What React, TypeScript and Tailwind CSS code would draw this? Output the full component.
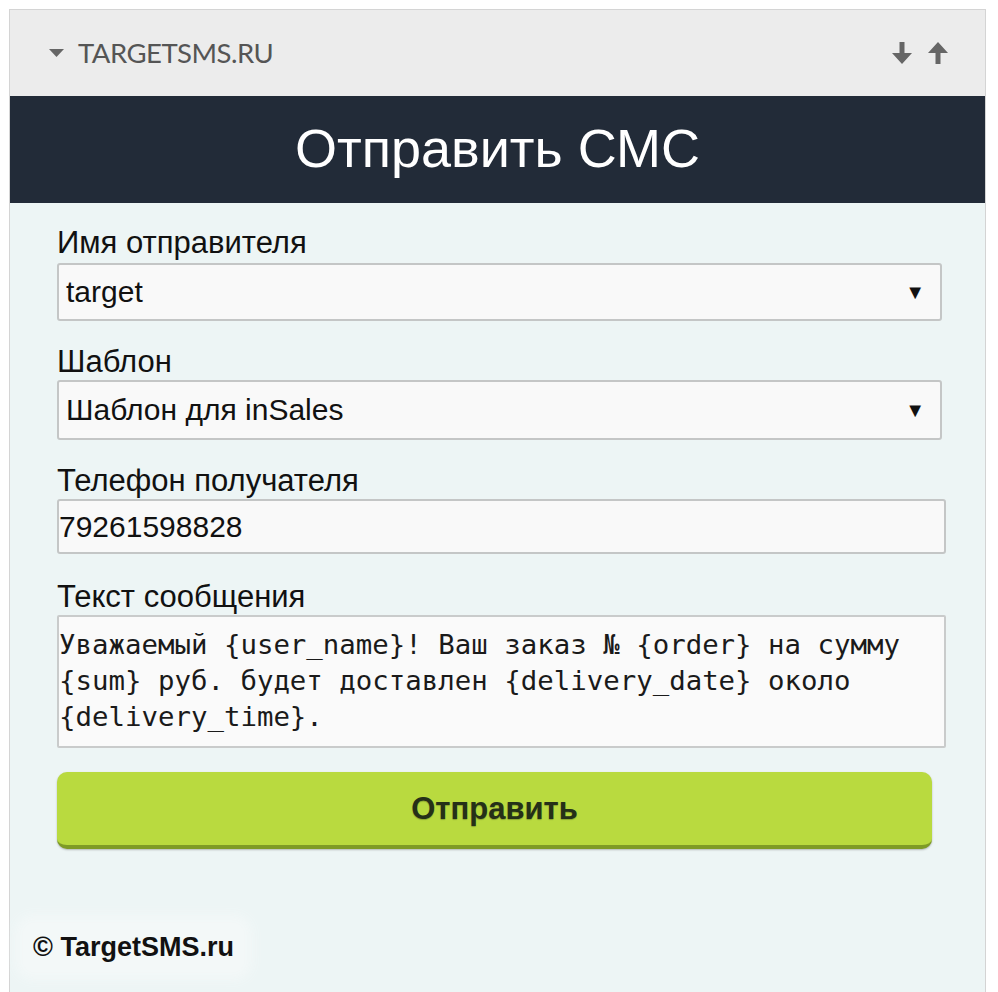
import React from "react";

function Arrow({ up }: { up?: boolean }) {
  return (
    <svg width="22" height="24" viewBox="0 0 22 24" className={up ? "" : "rotate-180"}>
      <path d="M11 1 L21 12 L13.5 12 L13.5 23 L8.5 23 L8.5 12 L1 12 Z" fill="#666666" />
    </svg>
  );
}

export default function App() {
  return (
    <div className="min-h-[992px] w-[998px] overflow-hidden bg-white" style={{ fontFamily: "Arial, 'Liberation Sans', sans-serif" }}>
      <div className="ml-[9px] mt-[9px] w-[977px] h-[1000px] border border-[#d4d4d4] flex flex-col">
        <div className="h-[86px] bg-[#ececec] flex items-center justify-between pl-[39px] pr-[36px]">
          <div className="flex items-center gap-[14px]">
            <svg width="15" height="8" viewBox="0 0 15 8"><path d="M0 0 L15 0 L7.5 8 Z" fill="#666" /></svg>
            <span className="text-[27.5px] text-[#555] tracking-[-0.5px]" style={{ fontFamily: "Lato, sans-serif" }}>TARGETSMS.RU</span>
          </div>
          <div className="flex items-center gap-[14px] pb-[1px]">
            <Arrow />
            <Arrow up />
          </div>
        </div>
        <div className="h-[107px] bg-[#222b38] flex items-center justify-center">
          <h1 className="text-[54px] text-white leading-none pb-[4px]">Отправить СМС</h1>
        </div>
        <div className="flex-1 bg-[#edf5f5] pl-[47px] pr-[39px] pt-[23px] text-[#111]">
          <div className="text-[31px] leading-[34px]">Имя отправителя</div>
          <div className="mt-[3px] w-[885px] h-[58px] bg-[#f9f9f9] border-2 border-[#c4c6c6] rounded-[3px] flex items-center justify-between pl-[7px] pr-[15px]">
            <span className="text-[30px] pb-[1px]">target</span>
            <span className="text-[20px]">▼</span>
          </div>
          <div className="mt-[24px] text-[31px] leading-[34px]">Шаблон</div>
          <div className="mt-[1px] w-[885px] h-[60px] bg-[#f9f9f9] border-2 border-[#c4c6c6] rounded-[3px] flex items-center justify-between pl-[7px] pr-[15px]">
            <span className="text-[30px] pb-[1px]">Шаблон для inSales</span>
            <span className="text-[20px]">▼</span>
          </div>
          <div className="mt-[24px] text-[31px] leading-[34px]">Телефон получателя</div>
          <div className="mt-[1px] w-[889px] h-[55px] bg-[#f9f9f9] border-2 border-[#c4c6c6] rounded-[3px] flex items-center pl-0">
            <span className="text-[30px] pb-[1px]">79261598828</span>
          </div>
          <div className="mt-[26px] text-[31px] leading-[34px]">Текст сообщения</div>
          <div className="mt-[1px] w-[889px] h-[133px] bg-[#fafafa] border-2 border-[#c9cbcb] rounded-[2px] pt-[10px] pl-0">
            <div className="text-[27.4px] leading-[36px] text-[#1a1a1a] whitespace-pre" style={{ fontFamily: "'DejaVu Sans Mono', 'Liberation Mono', monospace" }}>
              {"Уважаемый {user_name}! Ваш заказ № {order} на сумму\n{sum} руб. будет доставлен {delivery_date} около\n{delivery_time}."}
            </div>
          </div>
          <button className="mt-[24px] w-[875px] h-[77px] rounded-[10px] bg-[#b9da3f] border-b-[4px] border-[#7e9b26] shadow-[0_1px_2px_rgba(0,0,0,0.25)] flex items-center justify-center">
            <span className="text-[31px] font-bold text-[#253018] pt-[1px]" style={{ textShadow: "0 1px 1px rgba(0,0,0,0.25)" }}>Отправить</span>
          </button>
          <div className="-ml-[34px] mt-[74px] inline-block px-[10px] py-[4px] rounded-[10px] bg-[#f3f8f8] shadow-[0_0_12px_8px_#f3f8f8]">
            <span className="text-[27px] font-bold text-[#111]">© TargetSMS.ru</span>
          </div>
        </div>
      </div>
    </div>
  );
}
